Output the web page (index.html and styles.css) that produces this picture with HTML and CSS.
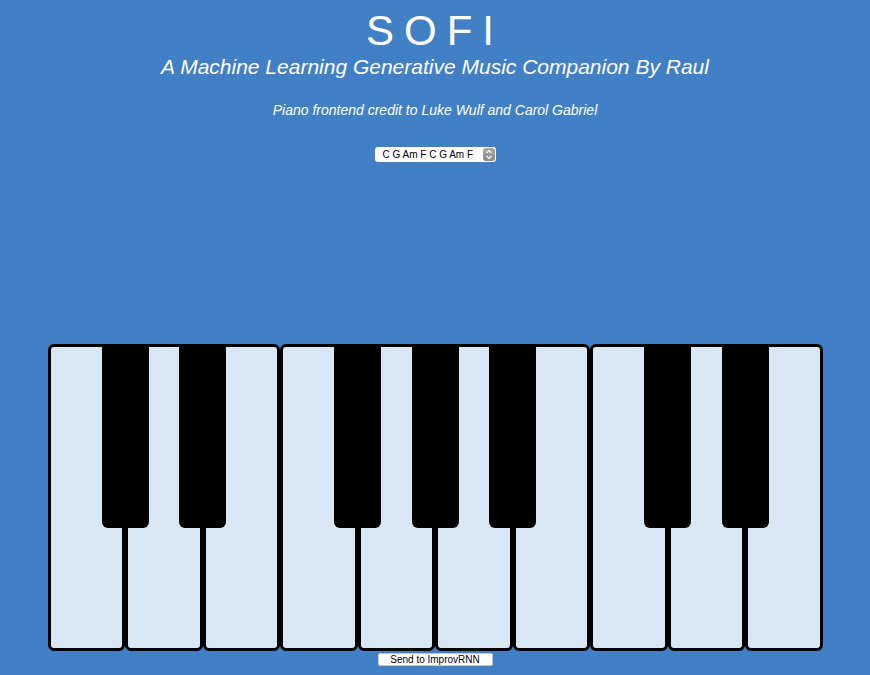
FILE: index.html
```html
<!DOCTYPE html>
<html>
<head>
<meta charset="utf-8">
<title>SOFI</title>
<link rel="stylesheet" href="styles.css">
</head>
<body>
<header class="intro">
  <h1 class="title">SOFI</h1>
  <h2 class="subtitle">A Machine Learning Generative Music Companion By Raul</h2>
  <p class="credit">Piano frontend credit to Luke Wulf and Carol Gabriel</p>
  <div class="picker">
    <span class="picker-value">C G Am F C G Am F</span>
    <span class="picker-stepper">
      <svg width="8" height="11" viewBox="0 0 8 11"><path d="M1.5 4 L4 1.5 L6.5 4" fill="none" stroke="#fff" stroke-width="1.1"/><path d="M1.5 7 L4 9.5 L6.5 7" fill="none" stroke="#fff" stroke-width="1.1"/></svg>
    </span>
  </div>
</header>
<main class="piano">
  <div class="white"><div class="black"></div></div>
  <div class="white"><div class="black"></div></div>
  <div class="white"></div>
  <div class="white"><div class="black"></div></div>
  <div class="white"><div class="black"></div></div>
  <div class="white"><div class="black"></div></div>
  <div class="white"></div>
  <div class="white"><div class="black"></div></div>
  <div class="white"><div class="black"></div></div>
  <div class="white"></div>
</main>
<div class="actions">
  <button class="send">Send to ImprovRNN</button>
</div>
</body>
</html>
```
FILE: styles.css
```css
html, body {
  margin: 0;
  padding: 0;
}
body {
  background: #4180c4;
  color: #fff;
  font-family: "Liberation Sans", Arial, sans-serif;
  text-align: center;
  width: 870px;
  height: 675px;
  overflow: hidden;
}
.intro {
  display: flex;
  flex-direction: column;
  align-items: center;
}
.title {
  margin: 7px 0 0;
  font-size: 42px;
  line-height: 48px;
  font-weight: normal;
  letter-spacing: 10px;
}
.subtitle {
  margin: 0;
  font-size: 21px;
  line-height: 24px;
  font-weight: normal;
  font-style: italic;
}
.credit {
  margin: 23px 0 0;
  font-size: 14px;
  line-height: 16px;
  font-style: italic;
}
.picker {
  margin-top: 29px;
  width: 121px;
  height: 15px;
  display: flex;
  align-items: stretch;
  background: #fff;
  border-radius: 3px;
  color: #000;
  font-size: 10px;
  box-sizing: border-box;
}
.picker-value {
  flex: 1;
  line-height: 15px;
  text-align: left;
  padding-left: 8px;
}
.picker-stepper {
  width: 12px;
  margin: 1px 1px 1px 0;
  border-radius: 3px;
  background: linear-gradient(#a9a9a9, #8a8a8a);
  display: flex;
  align-items: center;
  justify-content: center;
}
.piano {
  margin: 182px auto 0;
  width: 775px;
  height: 307px;
  display: flex;
}
.white {
  position: relative;
  flex: 0 0 77.5px;
  height: 307px;
  box-sizing: border-box;
  border: 3px solid #000;
  border-radius: 6px;
  background: #d9e6f4;
}
.black {
  position: absolute;
  top: -3px;
  left: 51px;
  width: 47px;
  height: 184px;
  background: #000;
  border-radius: 0 0 6px 6px;
  z-index: 2;
}
.actions {
  margin-top: 2px;
  display: flex;
  justify-content: center;
}
.send {
  width: 115px;
  height: 13px;
  padding: 0;
  margin: 0;
  background: #fff;
  border: 1px solid #c8c8c8;
  border-radius: 2px;
  font-family: "Liberation Sans", Arial, sans-serif;
  font-size: 10px;
  line-height: 11px;
  color: #000;
}
```
